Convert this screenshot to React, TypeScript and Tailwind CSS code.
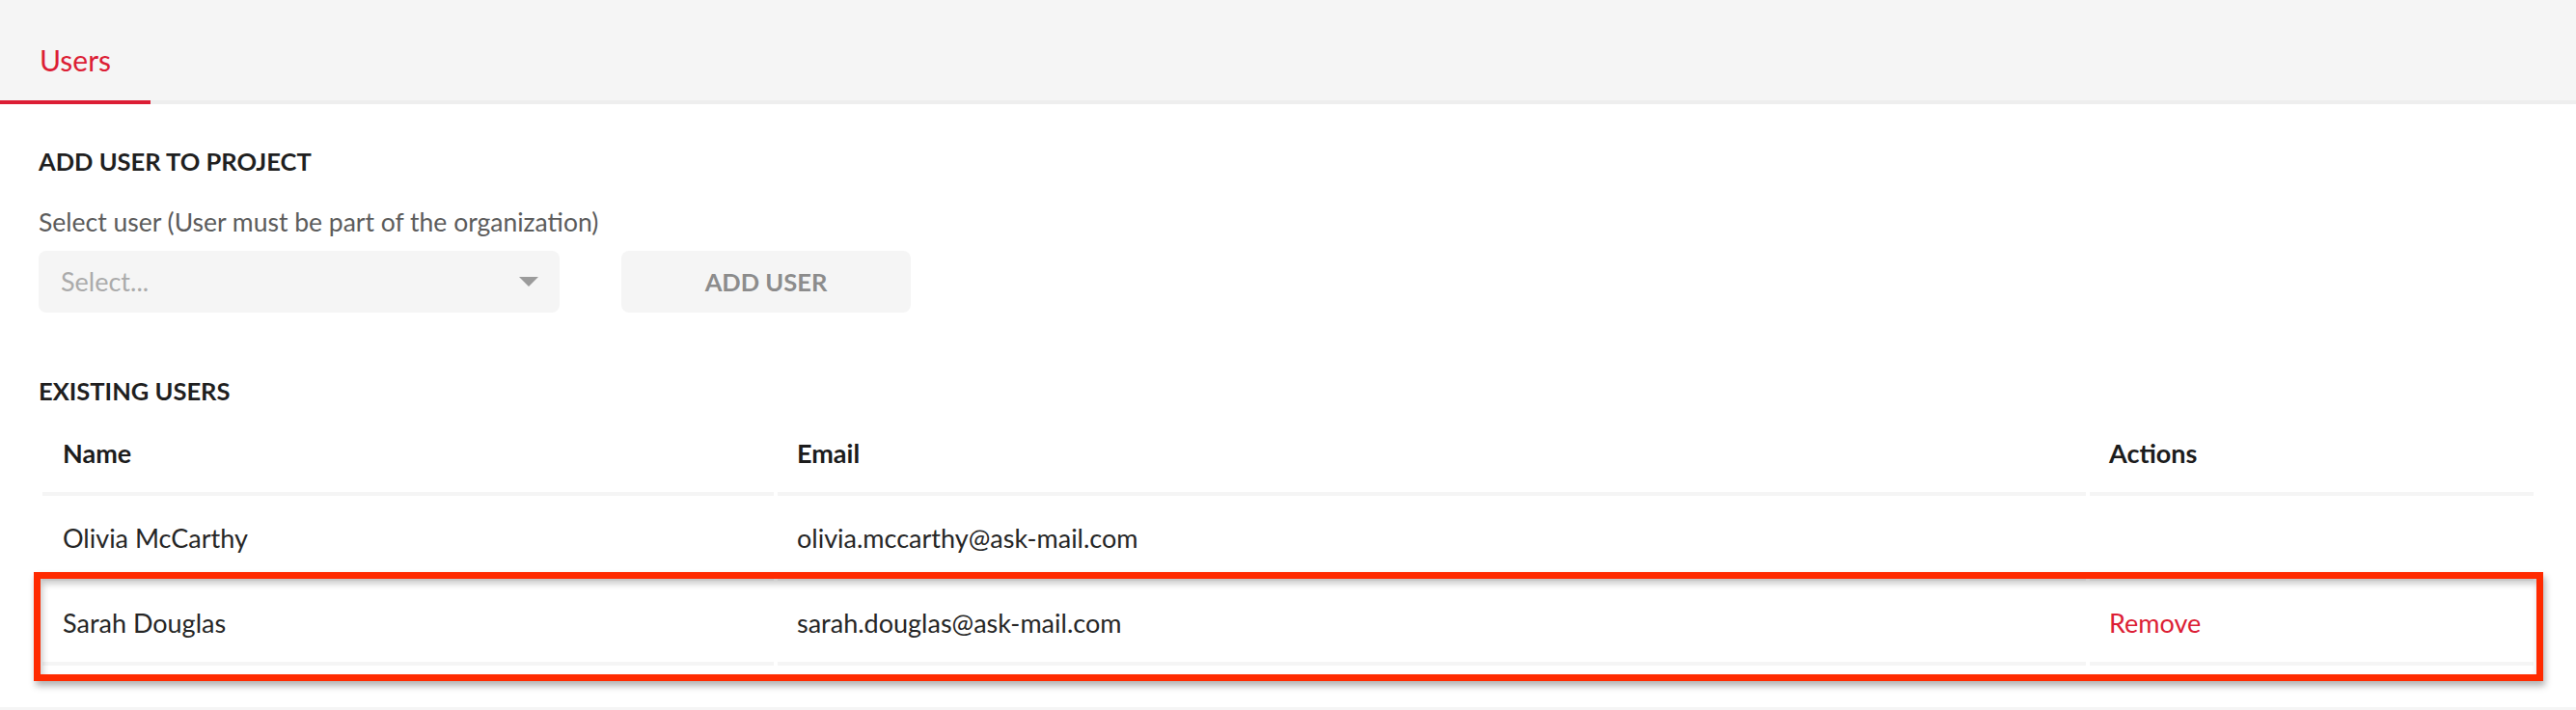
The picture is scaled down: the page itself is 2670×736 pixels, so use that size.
import { useState } from "react";

type User = { name: string; email: string; removable: boolean };

const users: User[] = [
    { name: "Olivia McCarthy", email: "olivia.mccarthy@ask-mail.com", removable: false },
    { name: "Sarah Douglas", email: "sarah.douglas@ask-mail.com", removable: true },
];

export default function App() {
    const [selected] = useState("");

    return (
        <div className="min-h-screen bg-white font-['Lato','Liberation_Sans',sans-serif] text-[#262626]">
            {/* tab bar */}
            <div className="flex items-end h-[108px] bg-[#f5f5f5] border-b-4 border-[#eeeeee]">
                <div className="-mb-1 px-[41px] pb-[22px] border-b-4 border-[#dc1e35] text-[30px] leading-[40px] text-[#dc1e35]">
                    Users
                </div>
            </div>

            <div className="px-[40px] pt-[41px]">
                <h2 className="text-[25.5px] leading-[36px] font-bold text-[#1f1f1f]">ADD USER TO PROJECT</h2>
                <p className="mt-[25px] text-[26.5px] leading-[40px] text-[#5c5c5c]">
                    Select user (User must be part of the organization)
                </p>

                <div className="mt-[10px] flex items-center gap-[64px]">
                    <div className="flex items-center justify-between w-[540px] h-[64px] pl-[23px] pr-[22px] rounded-lg bg-[#f5f5f5]">
                        <span className="text-[27px] leading-[40px] text-[#ababab]">{selected || "Select..."}</span>
                        <svg width="20" height="10" viewBox="0 0 20 10">
                            <polygon points="0,0 20,0 10,10" fill="#9b9b9b" />
                        </svg>
                    </div>
                    <button
                        type="button"
                        disabled
                        className="w-[300px] h-[64px] rounded-lg bg-[#f5f5f5] text-[25.5px] font-bold text-[#8c8c8c]"
                    >
                        ADD USER
                    </button>
                </div>

                <h2 className="mt-[63px] text-[25.5px] leading-[36px] font-bold text-[#1f1f1f]">EXISTING USERS</h2>

                <div className="relative mt-[3px]">
                    <table className="w-full border-separate border-spacing-x-[4px] border-spacing-y-0 text-left">
                        <thead>
                            <tr className="text-[27px] leading-[40px] font-bold text-[#1c1c1c]">
                                <th className="w-[758px] px-[21px] pt-[24px] pb-[20px] border-b-4 border-[#f5f5f5]">Name</th>
                                <th className="w-[1356px] px-[20px] pt-[24px] pb-[20px] border-b-4 border-[#f5f5f5]">Email</th>
                                <th className="px-[20px] pt-[24px] pb-[20px] border-b-4 border-[#f5f5f5]">Actions</th>
                            </tr>
                        </thead>
                        <tbody>
                            {users.map(u => (
                                <tr key={u.email} className="text-[27px] leading-[40px]">
                                    <td className="px-[21px] pt-[24px] pb-[20px] border-b-4 border-[#f5f5f5]">{u.name}</td>
                                    <td className="px-[20px] pt-[24px] pb-[20px] border-b-4 border-[#f5f5f5]">{u.email}</td>
                                    <td className="px-[20px] pt-[24px] pb-[20px] border-b-4 border-[#f5f5f5]">
                                        {u.removable && <a href="#" className="text-[#dc1e35]">Remove</a>}
                                    </td>
                                </tr>
                            ))}
                        </tbody>
                    </table>

                    {/* highlight annotation over the second row */}
                    <div className="pointer-events-none absolute left-[-5px] right-[-6px] top-[167px] h-[113px] border-[7px] border-[#ff2a00] shadow-[2px_5px_7px_rgba(0,0,0,0.3),inset_2px_5px_7px_rgba(0,0,0,0.22)]" />
                </div>
            </div>

            <div className="mt-[43px] h-[20px] bg-[#f5f5f5]" />
        </div>
    );
}
